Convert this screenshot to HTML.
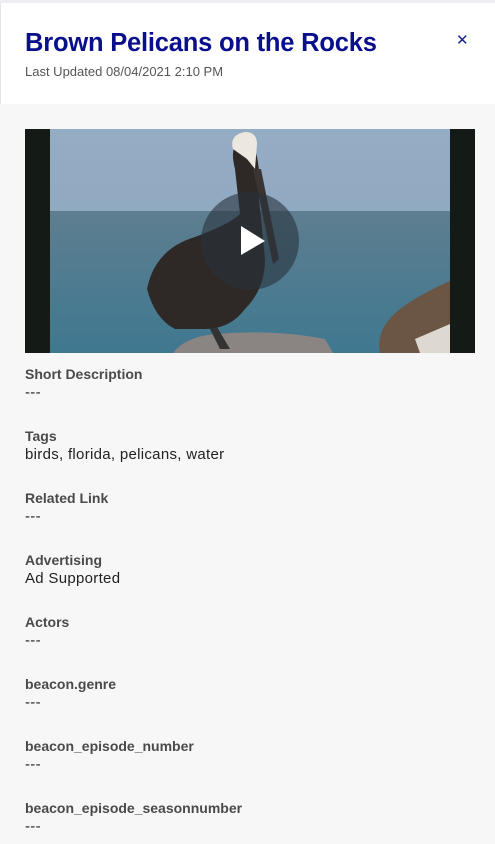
<!DOCTYPE html>
<html><head><meta charset="utf-8"><style>
*{margin:0;padding:0;box-sizing:border-box}
body{width:495px;height:844px;overflow:hidden;background:#f7f7f7;font-family:"Liberation Sans",sans-serif;position:relative}
.hdr{position:absolute;left:0;top:0;width:495px;height:104px;background:#fff;border-left:1px solid #e4e4ec}
.top{position:absolute;left:0;top:0;width:495px;height:3px;background:#ededf3}
h1{position:absolute;left:25px;top:29px;font-size:25.5px;font-weight:bold;color:#0a0f8c;letter-spacing:-0.2px;white-space:nowrap}
.sub{position:absolute;left:25px;top:64px;font-size:13px;color:#555}
.x{position:absolute;left:456px;top:31px;font-size:15px;color:#1a1f8c}
.vid{position:absolute;left:25px;top:129px;width:450px;height:224px;background:#141a16}
.item{position:absolute;left:25px;font-size:14px}
.item b{display:block;color:#4a4a4a;height:18px}
.item span{display:block;color:#222;height:18px;font-size:15px;letter-spacing:0.3px}
</style></head><body>
<div class="hdr"></div><div class="top"></div>
<h1>Brown Pelicans on the Rocks</h1>
<div class="sub">Last Updated 08/04/2021 2:10 PM</div>
<div class="x">✕</div>
<div class="vid">
<svg width="450" height="224" viewBox="0 0 450 224">
<defs><linearGradient id="s" x1="0" y1="0" x2="0" y2="1"><stop offset="0" stop-color="#94acc4"/><stop offset="1" stop-color="#8aa5bd"/></linearGradient>
<linearGradient id="w" x1="0" y1="0" x2="0" y2="1"><stop offset="0" stop-color="#5e7e90"/><stop offset="1" stop-color="#3f7890"/></linearGradient></defs>
<rect x="25" y="0" width="400" height="224" fill="url(#s)"/>
<rect x="25" y="82" width="400" height="142" fill="url(#w)"/>
<path d="M148 224 Q160 208 190 205 Q250 200 300 210 L308 224Z" fill="#8a8582"/>
<path d="M122 160 Q130 120 170 108 Q205 95 215 85 L210 40 Q205 20 212 15 L230 20 Q236 40 234 70 L240 130 Q240 160 220 180 Q205 200 180 200 Q160 200 150 200 Q130 190 122 160Z" fill="#2e2826"/>
<path d="M228 40 L236 40 L254 130 L248 135Z" fill="#3a3533"/>
<path d="M208 20 Q204 6 220 3 Q232 3 232 15 L230 40 L222 30Z" fill="#ece8df"/>
<path d="M185 200 L195 220 L205 220 L192 198Z" fill="#333"/>
<path d="M355 224 Q350 200 375 180 Q395 165 425 152 L425 224Z" fill="#6b5645"/>
<path d="M390 210 L425 195 L425 224 L395 224Z" fill="#ddd8d0"/>
<circle cx="225" cy="112" r="49" fill="rgba(40,50,60,0.6)"/>
<path d="M216 97 L240 112 L216 126Z" fill="#fff"/>
</svg></div>
<div class="item" style="top:366px"><b>Short Description</b><span>---</span></div>
<div class="item" style="top:428px"><b>Tags</b><span>birds, florida, pelicans, water</span></div>
<div class="item" style="top:490px"><b>Related Link</b><span>---</span></div>
<div class="item" style="top:552px"><b>Advertising</b><span>Ad Supported</span></div>
<div class="item" style="top:614px"><b>Actors</b><span>---</span></div>
<div class="item" style="top:676px"><b>beacon.genre</b><span>---</span></div>
<div class="item" style="top:738px"><b>beacon_episode_number</b><span>---</span></div>
<div class="item" style="top:800px"><b>beacon_episode_seasonnumber</b><span>---</span></div>
</body></html>
